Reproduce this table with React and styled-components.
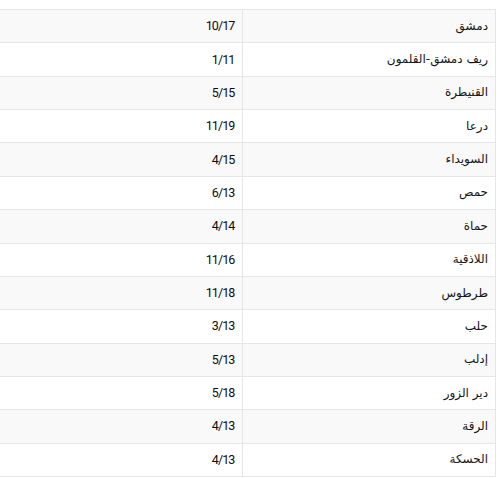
import React from "react";
import styled, { createGlobalStyle } from "styled-components";

const Global = createGlobalStyle`
  html, body { margin: 0; padding: 0; background: #fff; }
  body { padding: 9px 8px 0 8px; overflow: hidden; }
`;

const Wrap = styled.div`
  direction: rtl;
  width: 488px;
`;

const Table = styled.table`
  border-collapse: collapse;
  width: 508px;
  table-layout: fixed;
  font-family: "DejaVu Sans", "Noto Sans", sans-serif;
  font-size: 12px;
  color: #161616;
`;

const Row = styled.tr`
  height: 33.36px;
  background: ${(p) => (p.$striped ? "#f9f9f9" : "#ffffff")};
`;

const Cell = styled.td`
  border: 1px solid #e6e6e6;
  padding: 0 7px 1px 7px;
  text-align: right;
  vertical-align: middle;
  white-space: nowrap;
`;

const Num = styled.bdi`
  font-family: Roboto, "Noto Sans", sans-serif;
  font-weight: 400;
  font-size: 12.5px;
  letter-spacing: -0.9px;
  color: #0d0d0d;
  padding-left: 1px;
`;

const rows = [
  ["دمشق", "10/17"],
  ["ريف دمشق-القلمون", "1/11"],
  ["القنيطرة", "5/15"],
  ["درعا", "11/19"],
  ["السويداء", "4/15"],
  ["حمص", "6/13"],
  ["حماة", "4/14"],
  ["اللاذقية", "11/16"],
  ["طرطوس", "11/18"],
  ["حلب", "3/13"],
  ["إدلب", "5/13"],
  ["دير الزور", "5/18"],
  ["الرقة", "4/13"],
  ["الحسكة", "4/13"],
];

export default function App() {
  return (
    <>
      <Global />
      <Wrap>
        <Table>
          <tbody>
            {rows.map(([name, val], i) => (
              <Row key={name} $striped={i % 2 === 0}>
                <Cell>{name}</Cell>
                <Cell>
                  <Num dir="ltr">{val}</Num>
                </Cell>
              </Row>
            ))}
          </tbody>
        </Table>
      </Wrap>
    </>
  );
}
